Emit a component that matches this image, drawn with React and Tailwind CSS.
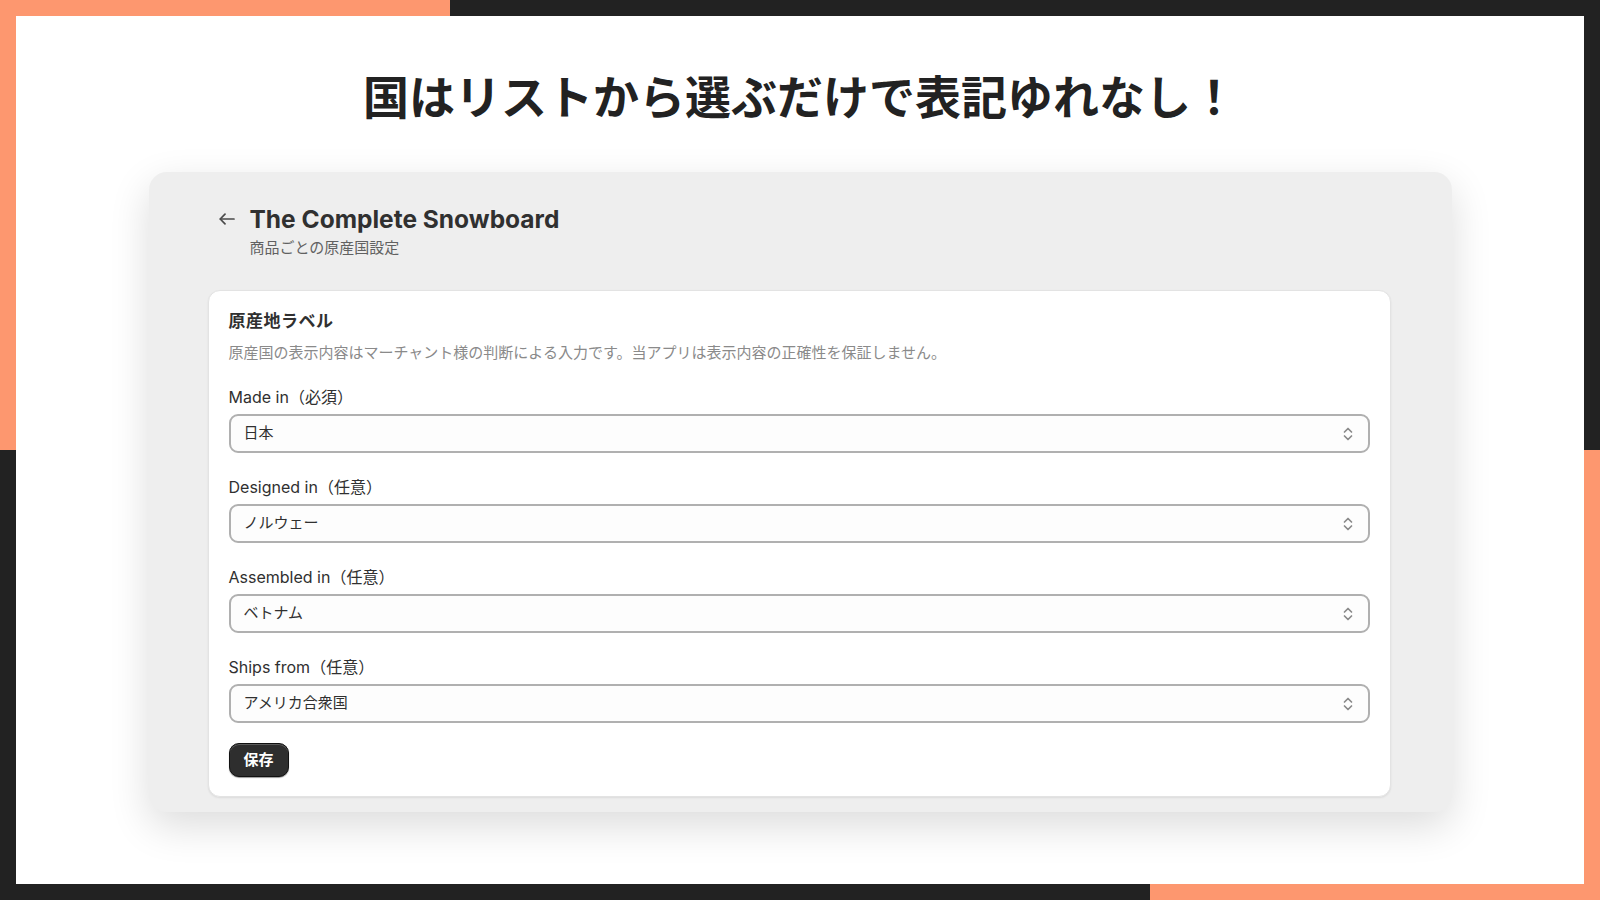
import { useState } from "react";

const countries = ["日本", "ノルウェー", "ベトナム", "アメリカ合衆国", "中国", "韓国", "カナダ"];

const fields = [
  { key: "made", label: "Made in", note: "（必須）", value: "日本" },
  { key: "designed", label: "Designed in", note: "（任意）", value: "ノルウェー" },
  { key: "assembled", label: "Assembled in", note: "（任意）", value: "ベトナム" },
  { key: "ships", label: "Ships from", note: "（任意）", value: "アメリカ合衆国" }
];

function Chevrons() {
  return (
    <svg width="10" height="16" viewBox="0 0 10 16" fill="none" stroke="#8a8a8a" strokeWidth="1.7" strokeLinecap="round" strokeLinejoin="round">
      <path d="M1.5 6l3.5-3.5 3.5 3.5" />
      <path d="M1.5 10l3.5 3.5 3.5-3.5" />
    </svg>
  );
}

function CountrySelect({ label, note, value, onChange }) {
  return (
    <div className="flex flex-col">
      <label className="text-[16px] leading-5 text-[#303030] mb-[7px]">
        {label}
        {note}
      </label>
      <div className="relative h-[39px]">
        <select
          value={value}
          onChange={e => onChange(e.target.value)}
          className="appearance-none w-full h-full rounded-[9px] border-2 border-[#b0b0b0] bg-[#fdfdfd] pl-[13px] pr-10 text-[15px] text-[#303030] outline-none"
        >
          {countries.map(c => (
            <option key={c} value={c}>{c}</option>
          ))}
        </select>
        <span className="pointer-events-none absolute right-[17px] top-1/2 -translate-y-1/2 flex">
          <Chevrons />
        </span>
      </div>
    </div>
  );
}

export default function App() {
  const [values, setValues] = useState(
    Object.fromEntries(fields.map(f => [f.key, f.value]))
  );

  return (
    <div
      className="w-[1600px] h-[900px] grid grid-cols-[16px_1fr_16px] grid-rows-[16px_1fr_16px] bg-white"
      style={{ fontFamily: "Inter, 'Noto Sans CJK JP', sans-serif" }}
    >
      {/* 枠: 上 */}
      <div className="col-span-3 flex">
        <div className="w-[450px] bg-[#fd976f]" />
        <div className="flex-1 bg-[#222222]" />
      </div>
      {/* 枠: 左 */}
      <div className="flex flex-col">
        <div className="h-[434px] bg-[#fd976f]" />
        <div className="flex-1 bg-[#222222]" />
      </div>

      {/* 中身 */}
      <div className="flex flex-col items-center bg-white">
        <h1
          className="mt-[51px] text-[46px] leading-[54px] font-bold text-[#222222]"
          style={{ fontFamily: "'Noto Sans CJK JP', sans-serif" }}
        >
          国はリストから選ぶだけで表記ゆれなし！
        </h1>

        <div className="mt-[51px] w-[1303px] rounded-[18px] bg-[#eeeeee] pl-[59px] pr-[61px] pt-[31px] pb-[15px] shadow-[0_14px_40px_rgba(0,0,0,0.14)]">
          <div className="flex items-center pl-[11px]">
            <svg width="16" height="12" viewBox="0 0 16 12" fill="none" stroke="#4a4a4a" strokeWidth="1.7" strokeLinecap="round" strokeLinejoin="round">
              <path d="M15 6H1.5" />
              <path d="M6 1.2L1.2 6 6 10.8" />
            </svg>
            <h2 className="ml-[15px] text-[24.5px] leading-8 font-bold text-[#303030]">
              The Complete Snowboard
            </h2>
          </div>
          <p className="ml-[42px] mt-[3px] text-[15px] leading-5 text-[#616161]">商品ごとの原産国設定</p>

          <div className="mt-[32px] rounded-[12px] border border-[#e3e3e3] bg-white px-5 pt-[18px] pb-[19px] shadow-[0_1px_2px_rgba(0,0,0,0.08)]">
            <h3 className="text-[17px] leading-6 font-bold tracking-[0.5px] text-[#303030]">原産地ラベル</h3>
            <p className="mt-[10px] text-[15px] leading-5 text-[#8a8a8a]">
              原産国の表示内容はマーチャント様の判断による入力です。当アプリは表示内容の正確性を保証しません。
            </p>

            <div className="mt-6 flex flex-col gap-6">
              {fields.map(f => (
                <CountrySelect
                  key={f.key}
                  label={f.label}
                  note={f.note}
                  value={values[f.key]}
                  onChange={v => setValues({ ...values, [f.key]: v })}
                />
              ))}
            </div>

            <button className="mt-5 h-[34px] w-[60px] rounded-[10px] border border-[#111] bg-[#2e2e2e] text-[15px] font-bold text-white shadow-[inset_0_1px_0_rgba(255,255,255,0.22),0_1px_1px_rgba(0,0,0,0.4)]">
              保存
            </button>
          </div>
        </div>
      </div>

      {/* 枠: 右 */}
      <div className="flex flex-col">
        <div className="h-[434px] bg-[#222222]" />
        <div className="flex-1 bg-[#fd976f]" />
      </div>
      {/* 枠: 下 */}
      <div className="col-span-3 flex">
        <div className="w-[1150px] bg-[#222222]" />
        <div className="flex-1 bg-[#fd976f]" />
      </div>
    </div>
  );
}
